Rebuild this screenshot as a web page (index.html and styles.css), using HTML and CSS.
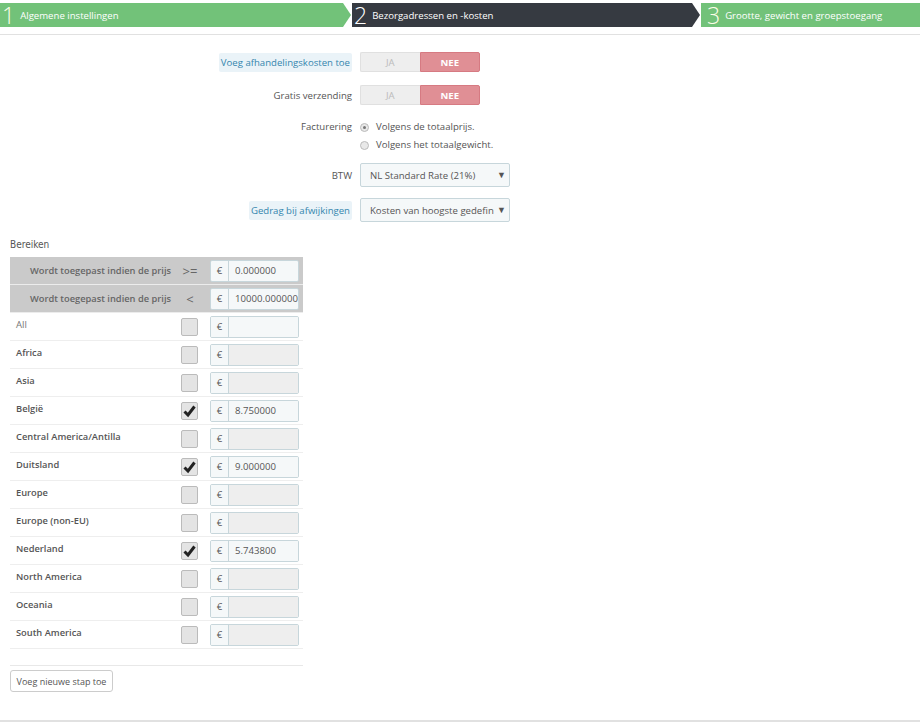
FILE: index.html
```html
<!DOCTYPE html>
<html lang="nl">
<head>
    <meta charset="UTF-8">
    <title>Vervoerder</title>
    <link rel="stylesheet" href="styles.css">
</head>
<body>

<!-- Wizard steps -->
<div class="steps">
    <div class="step step-done step-first"><span class="step-num">1</span><span class="step-title">Algemene instellingen</span></div>
    <div class="step step-current"><span class="step-num">2</span><span class="step-title">Bezorgadressen en -kosten</span></div>
    <div class="step step-done step-last"><span class="step-num">3</span><span class="step-title">Grootte, gewicht en groepstoegang</span></div>
</div>

<div class="panel">
    <div class="form-row">
        <div class="form-label"><span class="label-tip">Voeg afhandelingskosten toe</span></div>
        <div class="switch">
            <span class="switch-off">JA</span>
            <span class="switch-on">NEE</span>
        </div>
    </div>
    <div class="form-row">
        <div class="form-label">Gratis verzending</div>
        <div class="switch">
            <span class="switch-off">JA</span>
            <span class="switch-on">NEE</span>
        </div>
    </div>
    <div class="form-row form-row-radio">
        <div class="form-label">Facturering</div>
        <div class="radio-list">
            <label class="radio"><span class="radio-dot checked"></span>Volgens de totaalprijs.</label>
            <label class="radio"><span class="radio-dot"></span>Volgens het totaalgewicht.</label>
        </div>
    </div>
    <div class="form-row form-row-select">
        <div class="form-label">BTW</div>
        <div class="select"><span class="select-text">NL Standard Rate (21%)</span><span class="caret">&#9660;</span></div>
    </div>
    <div class="form-row form-row-select form-row-last">
        <div class="form-label"><span class="label-tip">Gedrag bij afwijkingen</span></div>
        <div class="select"><span class="select-text">Kosten van hoogste gedefin</span><span class="caret">&#9660;</span></div>
    </div>

    <!-- Ranges -->
    <div class="ranges-title">Bereiken</div>
    <div class="ranges">
        <div class="range-row range-head">
            <div class="col-name">Wordt toegepast indien de prijs</div>
            <div class="col-check op">&gt;=</div>
            <div class="col-price"><div class="input-group"><span class="addon">€</span><span class="input">0.000000</span></div></div>
        </div>
        <div class="range-row range-head">
            <div class="col-name">Wordt toegepast indien de prijs</div>
            <div class="col-check op">&lt;</div>
            <div class="col-price"><div class="input-group"><span class="addon">€</span><span class="input">10000.000000</span></div></div>
        </div>
        <div class="range-row zone zone-all">
            <div class="col-name">All</div>
            <div class="col-check"><span class="checkbox"></span></div>
            <div class="col-price"><div class="input-group"><span class="addon">€</span><span class="input"></span></div></div>
        </div>
        <div class="range-row zone">
            <div class="col-name">Africa</div>
            <div class="col-check"><span class="checkbox"></span></div>
            <div class="col-price"><div class="input-group"><span class="addon">€</span><span class="input disabled"></span></div></div>
        </div>
        <div class="range-row zone">
            <div class="col-name">Asia</div>
            <div class="col-check"><span class="checkbox"></span></div>
            <div class="col-price"><div class="input-group"><span class="addon">€</span><span class="input disabled"></span></div></div>
        </div>
        <div class="range-row zone">
            <div class="col-name">België</div>
            <div class="col-check"><span class="checkbox"><svg class="check" viewBox="0 0 15 16"><path d="M2.5 8.5 L6 12 L12.5 3.5"/></svg></span></div>
            <div class="col-price"><div class="input-group"><span class="addon">€</span><span class="input">8.750000</span></div></div>
        </div>
        <div class="range-row zone">
            <div class="col-name">Central America/Antilla</div>
            <div class="col-check"><span class="checkbox"></span></div>
            <div class="col-price"><div class="input-group"><span class="addon">€</span><span class="input disabled"></span></div></div>
        </div>
        <div class="range-row zone">
            <div class="col-name">Duitsland</div>
            <div class="col-check"><span class="checkbox"><svg class="check" viewBox="0 0 15 16"><path d="M2.5 8.5 L6 12 L12.5 3.5"/></svg></span></div>
            <div class="col-price"><div class="input-group"><span class="addon">€</span><span class="input">9.000000</span></div></div>
        </div>
        <div class="range-row zone">
            <div class="col-name">Europe</div>
            <div class="col-check"><span class="checkbox"></span></div>
            <div class="col-price"><div class="input-group"><span class="addon">€</span><span class="input disabled"></span></div></div>
        </div>
        <div class="range-row zone">
            <div class="col-name">Europe (non-EU)</div>
            <div class="col-check"><span class="checkbox"></span></div>
            <div class="col-price"><div class="input-group"><span class="addon">€</span><span class="input disabled"></span></div></div>
        </div>
        <div class="range-row zone">
            <div class="col-name">Nederland</div>
            <div class="col-check"><span class="checkbox"><svg class="check" viewBox="0 0 15 16"><path d="M2.5 8.5 L6 12 L12.5 3.5"/></svg></span></div>
            <div class="col-price"><div class="input-group"><span class="addon">€</span><span class="input">5.743800</span></div></div>
        </div>
        <div class="range-row zone">
            <div class="col-name">North America</div>
            <div class="col-check"><span class="checkbox"></span></div>
            <div class="col-price"><div class="input-group"><span class="addon">€</span><span class="input disabled"></span></div></div>
        </div>
        <div class="range-row zone">
            <div class="col-name">Oceania</div>
            <div class="col-check"><span class="checkbox"></span></div>
            <div class="col-price"><div class="input-group"><span class="addon">€</span><span class="input disabled"></span></div></div>
        </div>
        <div class="range-row zone">
            <div class="col-name">South America</div>
            <div class="col-check"><span class="checkbox"></span></div>
            <div class="col-price"><div class="input-group"><span class="addon">€</span><span class="input disabled"></span></div></div>
        </div>
    </div>
    <div class="ranges-foot"></div>
    <button class="btn-add">Voeg nieuwe stap toe</button>
</div>

</body>
</html>
```

FILE: styles.css
```css
* {
    box-sizing: border-box;
}
body {
    font-family: "Open Sans", "Liberation Sans", sans-serif;
    font-size: 9.6px;
    color: #555;
    background-color: #fff;
    margin: 0;
    padding: 0;
}

/* Wizard steps */
.steps {
    display: flex;
    margin-top: 3px;
    height: 24px;
}
.step {
    position: relative;
    display: flex;
    align-items: center;
    color: #fff;
    height: 24px;
}
.step-first {
    width: 343px;
    padding-left: 2px;
}
.step-current {
    width: 340px;
    margin-left: 9px;
    padding-left: 2px;
}
.step-last {
    flex: 1;
    margin-left: 9px;
    padding-left: 6px;
}
.step-done {
    background-color: #72c279;
}
.step-current {
    background-color: #363a41;
}
.step-first::after,
.step-current::after {
    content: "";
    position: absolute;
    right: -8px;
    top: 0;
    border-top: 12px solid transparent;
    border-bottom: 12px solid transparent;
    border-left: 8px solid #72c279;
}
.step-current::after {
    border-left-color: #363a41;
}
.step-num {
    font-size: 23px;
    font-weight: 300;
    line-height: 24px;
    margin-right: 5px;
    color: #fdfde8;
}
.step-current .step-num {
    color: #fff;
}

/* Panel */
.panel {
    margin-top: 7px;
    border-top: 1px solid #e1e1e1;
    border-bottom: 2px solid #e1e1e1;
    padding: 17px 10px 28px 10px;
}
.form-row {
    display: flex;
    align-items: center;
    margin-bottom: 13px;
}
.form-label {
    width: 350px;
    text-align: right;
    padding-right: 8px;
}
.label-tip {
    color: #3586ae;
    background-color: #eaf3f8;
    padding: 3px 2px;
    border-radius: 2px;
}

/* Yes / no switch */
.switch {
    display: flex;
    width: 120px;
    height: 20px;
}
.switch span {
    flex: 1;
    display: flex;
    align-items: center;
    justify-content: center;
}
.switch-off {
    background-color: #eee;
    color: #bbb;
    border: 1px solid #e0e0e0;
    border-right: none;
    border-radius: 2px 0 0 2px;
}
.switch-on {
    background-color: #e08f95;
    color: #fff;
    font-weight: bold;
    border: 1px solid #d67a82;
    border-radius: 0 2px 2px 0;
}

/* Radios */
.form-row-radio {
    align-items: flex-start;
    margin-top: 15px;
    margin-bottom: 11px;
}
.radio-list {
    display: flex;
    flex-direction: column;
    gap: 4px;
}
.radio {
    display: flex;
    align-items: center;
    line-height: 14px;
}
.radio-dot {
    width: 9px;
    height: 9px;
    border-radius: 50%;
    border: 1px solid #bbb;
    background-color: #e8e8e8;
    margin-right: 7px;
    position: relative;
}
.radio-dot.checked::after {
    content: "";
    position: absolute;
    left: 2px;
    top: 2px;
    width: 3px;
    height: 3px;
    border-radius: 50%;
    background-color: #777;
}

/* Select */
.form-row-select {
    margin-bottom: 11px;
}
.form-row-last {
    margin-bottom: 0;
}
.select {
    position: relative;
    display: flex;
    align-items: center;
    width: 150px;
    height: 24px;
    padding-left: 9px;
    border: 1px solid #c7d6db;
    border-radius: 2px;
    background-color: #f5f8f9;
}
.select-text {
    white-space: nowrap;
}
.caret {
    position: absolute;
    right: 3px;
    top: 6px;
    font-size: 9px;
    line-height: 10px;
    color: #555;
}

/* Ranges */
.ranges-title {
    font-family: "Liberation Sans Narrow", "DejaVu Sans Condensed", sans-serif;
    font-size: 10px;
    line-height: 13px;
    margin-top: 16px;
    margin-bottom: 6px;
}
.ranges {
    width: 293px;
}
.range-row {
    display: flex;
    align-items: center;
    height: 28px;
    border-bottom: 1px solid #eee;
}
.col-name {
    width: 166px;
    padding-left: 6px;
}
.col-check {
    width: 28px;
    padding-left: 5px;
}
.col-price {
    padding-left: 6px;
}
.range-head {
    background-color: #cacaca;
    border-bottom-color: #ececec;
}
.range-head .col-name {
    padding-left: 20px;
    font-size: 9.3px;
    font-weight: 600;
    color: #666;
    white-space: nowrap;
}
.range-head .op {
    padding-left: 0;
    text-align: center;
    font-size: 13px;
    color: #666;
}
.zone .col-name {
    font-size: 9.3px;
    font-weight: 600;
    padding-bottom: 5px;
}
.zone-all .col-name {
    font-size: 9.6px;
    font-weight: normal;
    color: #777;
}

/* Checkbox */
.checkbox {
    display: block;
    width: 17px;
    height: 18px;
    border: 1px solid #bbb;
    border-radius: 2px;
    background-color: #e4e4e4;
}
.check {
    display: block;
    width: 15px;
    height: 16px;
}
.check path {
    fill: none;
    stroke: #222;
    stroke-width: 3;
}

/* Price input group */
.input-group {
    display: flex;
    width: 89px;
    height: 22px;
    border: 1px solid #c7d6db;
    border-radius: 2px;
    overflow: hidden;
}
.addon {
    width: 18px;
    display: flex;
    align-items: center;
    justify-content: center;
    background-color: #f5f8f9;
    border-right: 1px solid #c7d6db;
}
.input {
    flex: 1;
    display: flex;
    align-items: center;
    padding-left: 6px;
    background-color: #f5f8f9;
    white-space: nowrap;
    overflow: hidden;
    color: #555;
}
.input.disabled {
    background-color: #eee;
}

.ranges-foot {
    width: 293px;
    height: 17px;
    border-bottom: 1px solid #e8e8e8;
}
.btn-add {
    display: block;
    margin-top: 4px;
    font-family: "Open Sans", "Liberation Sans", sans-serif;
    font-size: 9px;
    color: #555;
    background-color: #fff;
    border: 1px solid #ccc;
    border-radius: 3px;
    height: 22px;
    width: 103px;
    padding: 0;
}
```
